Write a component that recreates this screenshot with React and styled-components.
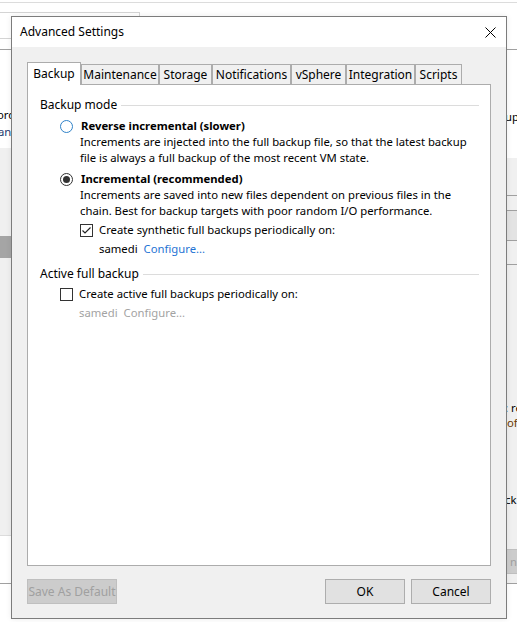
import React from "react";
import styled, { createGlobalStyle } from "styled-components";

const FONT = `"Segoe UI", "Noto Sans", "Open Sans", sans-serif`;
const FS = "11.3px";

const Global = createGlobalStyle`
  html, body { margin: 0; padding: 0; background: #ffffff; }
  body { font-family: ${FONT}; font-size: ${FS}; color: #000; overflow: hidden; }
  * { box-sizing: border-box; }
`;

const Stage = styled.div`
  position: relative;
  width: 517px;
  height: 622px;
  overflow: hidden;
  background: #ffffff;
`;

/* ---------- window behind the dialog ---------- */
const Frag = styled.div`
  position: absolute;
  left: ${(p) => p.$x}px;
  top: ${(p) => p.$y}px;
  width: ${(p) => p.$w}px;
  height: ${(p) => p.$h}px;
  background: ${(p) => p.$bg || "transparent"};
`;
const Rule = styled.div`
  position: absolute;
  left: ${(p) => p.$x}px;
  top: ${(p) => p.$y}px;
  width: ${(p) => p.$w}px;
  height: 1px;
  background: ${(p) => p.$c || "#d9d9d9"};
`;
const FieldBox = styled.div`
  position: absolute;
  left: -1px;
  top: 12px;
  width: 141px;
  height: 27px;
  border: 1px solid #d4d4d4;
`;
const FragText = styled.span`
  position: absolute;
  left: ${(p) => p.$x}px;
  top: ${(p) => p.$y}px;
  font-size: ${FS};
  line-height: 14px;
  white-space: nowrap;
  color: ${(p) => p.$c || "#000"};
`;
const FragButton = styled.div`
  position: absolute;
  left: 497px;
  top: 549px;
  width: 40px;
  height: 25px;
  background: #cccccc;
  border: 1px solid #bfbfbf;
  color: #a0a0a0;
  font-size: ${FS};
  line-height: 23px;
  padding-left: 12px;
`;

function Backdrop() {
  return (
    <>
      <Rule $x={0} $y={2} $w={517} $c="#dcdcdc" />
      <FieldBox />
      <Rule $x={0} $y={49} $w={517} $c="#a0a0a0" />
      {/* left side */}
      <Frag $x={0} $y={148} $w={20} $h={387} $bg="#f0f0f0" />
      <Frag $x={0} $y={236} $w={20} $h={22} $bg="#a5a5a5" />
      <Rule $x={0} $y={535} $w={20} $c="#dcdcdc" />
      <FragText $x={-3} $y={108}>ord</FragText>
      <FragText $x={-2} $y={125} $c="#1d3b6f">an</FragText>
      {/* right side */}
      <Frag $x={500} $y={158} $w={17} $h={425} $bg="#f0f0f0" />
      <Rule $x={500} $y={195} $w={17} $c="#a0a0a0" />
      <Frag $x={500} $y={211} $w={17} $h={29} $bg="#e3e3e3" />
      <Rule $x={500} $y={210} $w={17} $c="#a0a0a0" />
      <Rule $x={500} $y={240} $w={17} $c="#a0a0a0" />
      <Rule $x={500} $y={264} $w={17} $c="#a0a0a0" />
      <FragText $x={505} $y={110}>up</FragText>
      <FragText $x={505} $y={401}>: re</FragText>
      <FragText $x={507} $y={416} $c="#6b3a00">of</FragText>
      <FragText $x={505} $y={493}>ck</FragText>
      <FragButton>n</FragButton>
      <Rule $x={0} $y={583} $w={517} $c="#a0a0a0" />
    </>
  );
}

/* ---------- dialog ---------- */
const Dialog = styled.div`
  position: absolute;
  left: 11px;
  top: 16px;
  width: 496px;
  height: 603px;
  border: 1px solid #7c7c7c;
  background: #f0f0f0;
  display: flex;
  flex-direction: column;
  box-shadow: 0 0 6px rgba(0, 0, 0, 0.08);
`;

const TitleBar = styled.div`
  height: 30px;
  background: #ffffff;
  display: flex;
  align-items: center;
  justify-content: space-between;
  padding-left: 8px;
  flex-shrink: 0;
`;
const Title = styled.span`
  font-size: 12px;
  line-height: 16px;
  color: #000;
`;
const CloseButton = styled.div`
  width: 32px;
  height: 30px;
  display: flex;
  align-items: center;
  justify-content: center;
`;

const Body = styled.div`
  flex: 1;
  display: flex;
  flex-direction: column;
  padding: 15px 15px 14px 15px;
`;

const TabRow = styled.div`
  display: flex;
  align-items: flex-end;
  height: 22px;
  position: relative;
  z-index: 1;
`;
const Tab = styled.div`
  width: ${(p) => p.$w}px;
  height: ${(p) => (p.$active ? 23 : 20)}px;
  margin-bottom: ${(p) => (p.$active ? -1 : 0)}px;
  background: ${(p) => (p.$active ? "#ffffff" : "#f0f0f0")};
  border: 1px solid #acacac;
  border-bottom: none;
  display: flex;
  align-items: ${(p) => (p.$active ? "flex-start" : "center")};
  justify-content: center;
  padding-top: ${(p) => (p.$active ? 3 : 0)}px;
  font-size: 12px;
  line-height: 16px;
  white-space: nowrap;
  color: #000;
`;

const Panel = styled.div`
  flex: 1;
  background: #ffffff;
  border: 1px solid #acacac;
  padding: 12px 11px 0 12px;
`;

const GroupHeader = styled.div`
  display: flex;
  align-items: center;
  gap: 4px;
  margin-top: ${(p) => p.$mt || 0}px;
  font-size: 12px;
  line-height: 16px;
  &::after {
    content: "";
    flex: 1;
    height: 1px;
    background: #dcdcdc;
  }
`;

const Indent = styled.div`
  padding-left: ${(p) => p.$pl}px;
  margin-top: ${(p) => p.$mt || 0}px;
`;

const OptionRow = styled.div`
  display: flex;
  align-items: center;
  gap: ${(p) => p.$gap || 8}px;
  height: 16px;
  margin-top: ${(p) => p.$mt || 0}px;
`;

const OptionLabel = styled.span`
  font-weight: ${(p) => (p.$bold ? 700 : 400)};
  font-size: ${FS};
  line-height: 16px;
  white-space: nowrap;
  color: ${(p) => (p.$muted ? "#a3a3a3" : "#000")};
`;

const Desc = styled.div`
  padding-left: 20px;
  font-size: ${FS};
  line-height: 16px;
  color: #000;
`;

const Line = styled.div`
  white-space: nowrap;
`;

const Radio = styled.span`
  width: 13px;
  height: 13px;
  border-radius: 50%;
  border: 1px solid ${(p) => (p.$focus ? "#2f82c8" : "#333")};
  background: #fff;
  display: inline-flex;
  align-items: center;
  justify-content: center;
  flex-shrink: 0;
  &::after {
    content: "";
    display: ${(p) => (p.$checked ? "block" : "none")};
    width: 7px;
    height: 7px;
    border-radius: 50%;
    background: #333;
  }
`;

const Box = styled.span`
  width: 13px;
  height: 13px;
  border: 1px solid #333;
  background: #fff;
  display: inline-flex;
  align-items: center;
  justify-content: center;
  flex-shrink: 0;
`;

const Schedule = styled.div`
  display: flex;
  gap: 6px;
  margin-top: ${(p) => p.$mt || 0}px;
  padding-left: ${(p) => p.$pl || 0}px;
  font-size: ${FS};
  line-height: 16px;
  color: ${(p) => (p.$muted ? "#a3a3a3" : "#000")};
`;

const Link = styled.span`
  color: ${(p) => (p.$muted ? "#a3a3a3" : "#1f74d4")};
`;

const Footer = styled.div`
  display: flex;
  align-items: center;
  margin-top: 13px;
  gap: 6px;
`;
const Spacer = styled.div`
  flex: 1;
`;
const Button = styled.div`
  width: ${(p) => p.$w}px;
  height: 25px;
  border: 1px solid ${(p) => (p.$disabled ? "#bfbfbf" : "#adadad")};
  background: ${(p) => (p.$disabled ? "#cccccc" : "#e1e1e1")};
  color: ${(p) => (p.$disabled ? "#a0a0a0" : "#000")};
  display: flex;
  align-items: center;
  justify-content: center;
  font-size: 12px;
  line-height: 16px;
  white-space: nowrap;
`;

const tabs = [
  ["Backup", 54],
  ["Maintenance", 78],
  ["Storage", 53],
  ["Notifications", 79],
  ["vSphere", 55],
  ["Integration", 69],
  ["Scripts", 47],
];

const Check = () => (
  <svg width="11" height="11" viewBox="0 0 11 11">
    <polyline points="1.5,5.5 4,8 9.5,2.5" fill="none" stroke="#222" strokeWidth="1.2" />
  </svg>
);

export default function App() {
  return (
    <Stage>
      <Global />
      <Backdrop />
      <Dialog>
        <TitleBar>
          <Title>Advanced Settings</Title>
          <CloseButton>
            <svg width="11" height="11" viewBox="0 0 11 11">
              <path d="M0.5 0.5 L10.5 10.5 M10.5 0.5 L0.5 10.5" stroke="#000" strokeWidth="1" fill="none" />
            </svg>
          </CloseButton>
        </TitleBar>
        <Body>
          <TabRow>
            {tabs.map(([name, w], i) => (
              <Tab key={name} $w={w} $active={i === 0}>
                {name}
              </Tab>
            ))}
          </TabRow>
          <Panel>
            <GroupHeader>Backup mode</GroupHeader>
            <Indent $pl={20} $mt={5}>
              <OptionRow>
                <Radio $focus />
                <OptionLabel $bold>Reverse incremental (slower)</OptionLabel>
              </OptionRow>
              <Desc>
                <Line>Increments are injected into the full backup file, so that the latest backup</Line>
                <Line>file is always a full backup of the most recent VM state.</Line>
              </Desc>
              <OptionRow $mt={5}>
                <Radio $checked />
                <OptionLabel $bold>Incremental (recommended)</OptionLabel>
              </OptionRow>
              <Desc>
                <Line>Increments are saved into new files dependent on previous files in the</Line>
                <Line>chain. Best for backup targets with poor random I/O performance.</Line>
              </Desc>
              <Indent $pl={20} $mt={3}>
                <OptionRow $gap={6}>
                  <Box>
                    <Check />
                  </Box>
                  <OptionLabel>Create synthetic full backups periodically on:</OptionLabel>
                </OptionRow>
                <Schedule $mt={3} $pl={19}>
                  <span>samedi</span>
                  <Link>Configure...</Link>
                </Schedule>
              </Indent>
            </Indent>
            <GroupHeader $mt={9}>Active full backup</GroupHeader>
            <Indent $pl={20} $mt={4}>
              <OptionRow $gap={6}>
                <Box />
                <OptionLabel>Create active full backups periodically on:</OptionLabel>
              </OptionRow>
              <Schedule $mt={3} $pl={19} $muted>
                <span>samedi</span>
                <Link $muted>Configure...</Link>
              </Schedule>
            </Indent>
          </Panel>
          <Footer>
            <Button $w={90} $disabled>
              Save As Default
            </Button>
            <Spacer />
            <Button $w={80}>OK</Button>
            <Button $w={80}>Cancel</Button>
          </Footer>
        </Body>
      </Dialog>
    </Stage>
  );
}
